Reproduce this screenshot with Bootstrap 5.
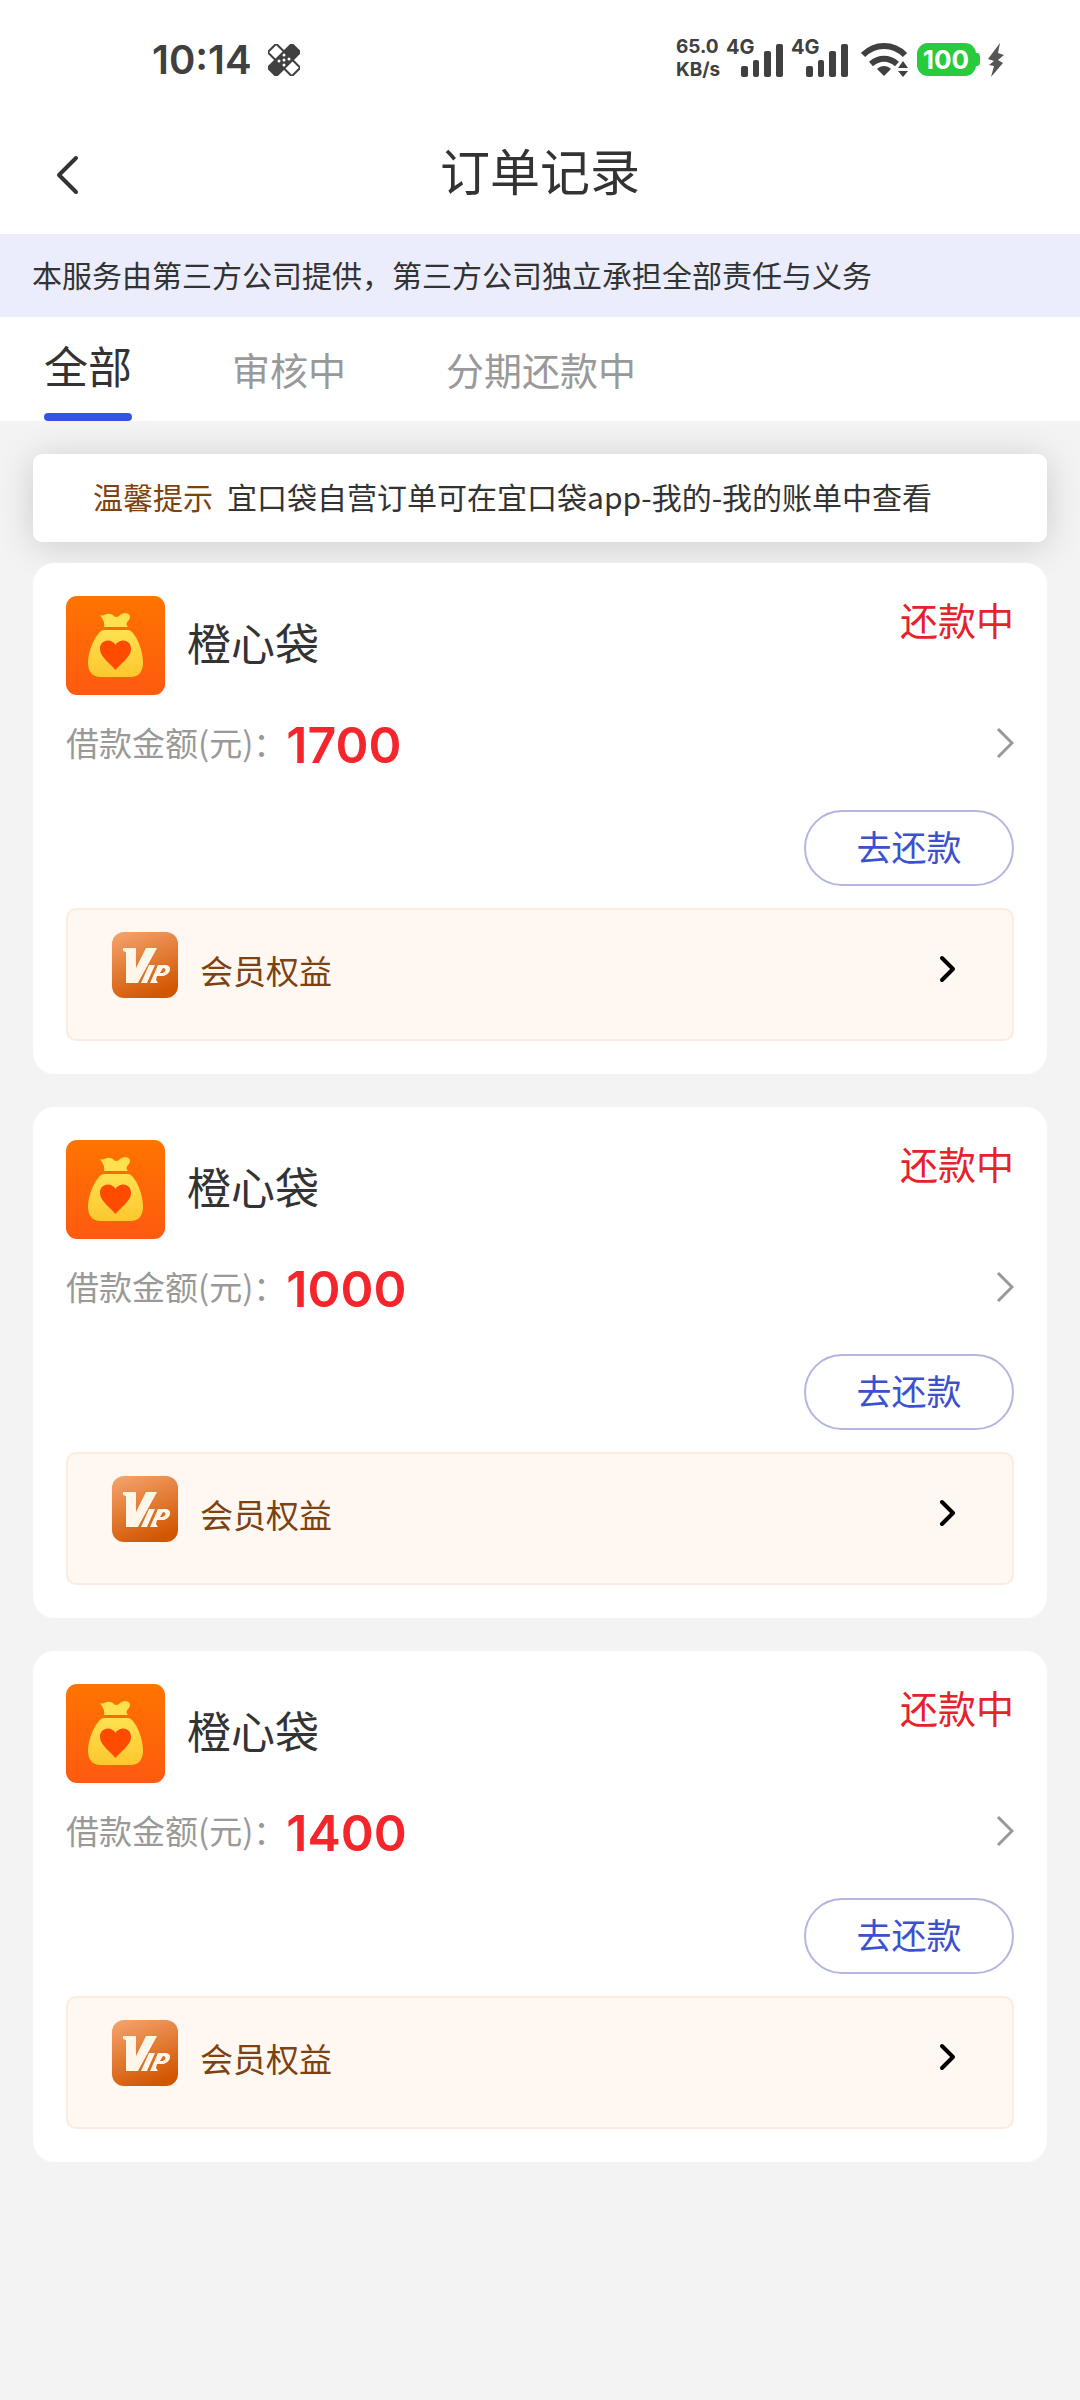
<!DOCTYPE html>
<html lang="zh-CN">
<head>
<meta charset="utf-8">
<meta name="viewport" content="width=device-width, initial-scale=1">
<title>订单记录</title>
<link href="https://cdn.jsdelivr.net/npm/bootstrap@5.3.0/dist/css/bootstrap.min.css" rel="stylesheet">
<style>
  body { font-family: "Noto Sans CJK SC", "Noto Sans", sans-serif; background: #f3f3f3; color: #333; min-height: 100vh; }
  svg { display: block; flex: none; }
  a { color: inherit; text-decoration: none; }
  .status-bar { height: 120px; padding: 0 76px 0 152px; font-family: Inter, sans-serif; font-weight: 600; color: #404040; }
  .clock { font-size: 40px; line-height: 48px; }
  .net-speed { font-size: 19px; line-height: 23px; font-weight: 700; width: 50px; padding-bottom: 4px; }
  .title-bar { height: 114px; padding: 0 48px 4px; }
  .title-bar h1 { font-size: 50px; line-height: 60px; font-weight: 400; padding-bottom: 12px; }
  .back-btn { width: 40px; height: 60px; }
  .notice-bar { background: #ebedfd; padding: 18px 32px 21px; font-size: 30px; line-height: 44px; }
  .order-tabs { height: 104px; padding: 0 44px; gap: 100px; font-size: 38px; color: #999; }
  .order-tabs .nav-link { padding: 24px 0 0; color: inherit; line-height: 56px; }
  .order-tabs .nav-link.active { padding-top: 18px; font-size: 44px; line-height: 60px; color: #333; position: relative; }
  .order-tabs .nav-link.active::after { content: ""; position: absolute; left: 0; right: 0; bottom: 0; height: 8px; border-radius: 4px; background: #3652e3; }
  .orders { padding: 33px; }
  .tip-card { background: #fff; border-radius: 9px; padding: 20px 60px 24px; font-size: 30px; line-height: 44px; margin-bottom: 21px; box-shadow: 0 4px 36px rgba(0,0,0,.16); gap: 14px; }
  .brown { color: #7d420f; }
  .order-card { position: relative; background: #fff; border-radius: 21px; padding: 33px; margin-bottom: 33px; }
  .shop-name { font-size: 44px; line-height: 60px; font-weight: 400; margin: 0 0 8px 22px; }
  .state-text { font-size: 38px; line-height: 46px; color: #e6222a; }
  .amount-row { height: 96px; }
  .amount-label { font-size: 33px; line-height: 44px; color: #999; padding-bottom: 2px; }
  .amount-num { font-family: Inter, sans-serif; font-size: 50px; line-height: 60px; font-weight: 600; color: #f4262c; padding-top: 4px; }
  .pay-btn { width: 210px; height: 76px; border: 2px solid #b4b6e2; border-radius: 38px; color: #3b50d0; font-size: 35px; line-height: 50px; padding: 8px 0 12px; margin: 19px 0 22px; }
  .pay-btn:hover { border-color: #3b50d0; color: #3b50d0; }
  .vip-row { height: 133px; background: #fff7f1; border: 2px solid #fbece0; border-radius: 10px; padding: 22px 56px 0 44px; font-size: 33px; line-height: 44px; color: #7d420f; }
  .vip-row span { padding: 16px 0 0 22px; }
  .vip-row .go-icon { margin: 22px 0 0 auto; }
</style>
<script src="https://cdn.jsdelivr.net/npm/bootstrap@5.3.0/dist/js/bootstrap.bundle.min.js"></script>
</head>
<body>
<svg width="0" height="0" class="position-absolute" aria-hidden="true">
  <defs>
    <linearGradient id="gOrange" x1="0" y1="0" x2="0" y2="1"><stop offset="0" stop-color="#ff7400"/><stop offset="1" stop-color="#ff5a10"/></linearGradient>
    <linearGradient id="gYellow" x1="0" y1="0" x2="0" y2="1"><stop offset="0" stop-color="#ffe150"/><stop offset="1" stop-color="#fcc72e"/></linearGradient>
    <linearGradient id="gVip" x1="0.2" y1="0" x2="0.6" y2="1"><stop offset="0" stop-color="#f3a069"/><stop offset="1" stop-color="#d25500"/></linearGradient>
    <symbol id="bag" viewBox="0 0 99 99">
      <rect width="99" height="99" rx="11" fill="url(#gOrange)"/>
      <path d="M34 19c4 2 6-2 10-1 3 0 4 3 6 3 3 0 5-4 9-4 5 0 6 4 4 7-3 3-3 5-1 7H38c1-5-1-7-4-12Z" fill="#ffe04f"/>
      <path d="M38 34h24c6 0 15 18 15 33 0 9-5 14-12 14H34c-7 0-12-5-12-14 0-15 10-33 16-33Z" fill="url(#gYellow)"/>
      <path d="M49.500 74C44 67 34 61 34 53c0-10 12-11 15.500-4C53 42 65 43 65 53c0 8-10 14-15.500 21Z" fill="#ff4b00"/>
    </symbol>
    <symbol id="vip" viewBox="0 0 66 66">
      <rect width="66" height="66" rx="12" fill="url(#gVip)"/>
      <path d="M11 16h13v20l10-20h11L26 51H14V20l-3-1ZM37 33h6L35 51h-6ZM46 33h7c9 0 5 11-3 11h-5l-1 4 2 3h-8Zm5 3-3 5c6 1 7-5 3-5Z" fill="#fff5e8" fill-rule="evenodd"/>
    </symbol>
    <symbol id="bars" viewBox="0 0 42 34">
      <rect x="0" y="22" width="7" height="11" rx="2"/><rect x="12" y="16" width="6" height="17" rx="2"/><rect x="23" y="7" width="7" height="26" rx="2"/><rect x="35" y="0" width="7" height="33" rx="2"/>
    </symbol>
  </defs>
</svg>

<div class="status-bar d-flex align-items-center justify-content-between bg-white">
  <div class="d-flex align-items-center gap-3">
    <span class="clock">10:14</span>
    <svg width="32" height="32" viewBox="0 0 32 32" aria-hidden="true">
      <g transform="rotate(45 16 16)"><rect x="-1" y="10" width="34" height="12" rx="1" fill="#fff" stroke="#404040" stroke-width="2"/></g>
      <g transform="rotate(-45 16 16)"><rect x="-2" y="9" width="36" height="14" rx="2" fill="#404040"/></g>
      <g fill="#fff"><circle cx="16" cy="11" r="1.500"/><circle cx="21" cy="15" r="1.500"/><circle cx="11" cy="17" r="1.500"/><circle cx="16" cy="16" r="1.500"/><circle cx="16" cy="21" r="1.500"/></g>
    </svg>
  </div>
  <div class="d-flex align-items-center">
    <div class="net-speed">65.0<br>KB/s</div>
    <svg width="65" height="60" viewBox="0 -8 65 60" fill="#404040"><text x="0" y="16" font-size="20" font-weight="700">4G</text><use href="#bars" x="15" y="6" width="42" height="34"/></svg>
    <svg width="70" height="60" viewBox="0 -8 70 60" fill="#404040"><text x="0" y="16" font-size="20" font-weight="700">4G</text><use href="#bars" x="15" y="6" width="42" height="34"/></svg>
    <svg width="56" height="34" viewBox="0 0 56 34" aria-hidden="true">
      <path d="M2 12C14 0 32 0 44 12" fill="none" stroke="#404040" stroke-width="6"/>
      <path d="M10 21c8-7 18-7 26 0" fill="none" stroke="#404040" stroke-width="6"/>
      <path d="M16 26c4-4 10-4 14 0l-7 7Z" fill="#404040"/>
      <path d="m42 18 5 7H37ZM42 34l-5-6h10Z" fill="#404040"/>
    </svg>
    <svg width="71" height="34" viewBox="0 0 71 34"><rect width="59" height="33" rx="11" fill="#27cb3b"/><path d="M58 10h2q3 0 3 4v5q0 4-3 4h-2Z" fill="#27cb3b"/><text x="29" y="26" text-anchor="middle" font-size="26" font-weight="700" fill="#fff">100</text></svg>
    <svg width="16" height="34" viewBox="0 0 16 34" aria-hidden="true"><path d="M12 0 0 16l6 2-5 4 5 1-3 11L15 20l-5-3 6-5-6-2Z" fill="#555"/></svg>
  </div>
</div>

<header class="title-bar d-flex align-items-center justify-content-between bg-white">
  <button type="button" class="back-btn btn p-0 border-0" aria-label="返回"><svg width="40" height="44" viewBox="0 0 40 44" fill="none" stroke="#333" stroke-width="4" stroke-linecap="round" stroke-linejoin="round"><path d="M28 5 11 22l17 17"/></svg></button>
  <h1 class="m-0">订单记录</h1>
  <span class="back-btn"></span>
</header>
<div class="notice-bar">本服务由第三方公司提供，第三方公司独立承担全部责任与义务</div>
<nav class="order-tabs nav flex-nowrap bg-white align-items-stretch">
  <a class="nav-link active" href="#all" aria-current="page">全部</a>
  <a class="nav-link" href="#review">审核中</a>
  <a class="nav-link" href="#repaying">分期还款中</a>
</nav>

<main class="orders">
  <div class="tip-card d-flex"><span class="brown">温馨提示</span><span>宜口袋自营订单可在宜口袋app-我的-我的账单中查看</span></div>

  <article class="order-card">
    <div class="d-flex align-items-start justify-content-between">
      <div class="d-flex align-items-center"><svg width="99" height="99"><use href="#bag"/></svg><h2 class="shop-name">橙心袋</h2></div>
      <span class="state-text">还款中</span>
    </div>
    <a href="#order1" class="amount-row d-flex align-items-center">
      <span class="amount-label">借款金额(元)：</span><span class="amount-num">1700</span>
      <svg class="ms-auto" width="18" height="30" viewBox="0 0 18 30" fill="none" stroke="#999" stroke-width="3"><path d="M2 1l14 14L2 29"/></svg>
    </a>
    <div class="d-flex justify-content-end"><button type="button" class="pay-btn btn">去还款</button></div>
    <a href="#vip1" class="vip-row d-flex align-items-start"><svg width="66" height="66"><use href="#vip"/></svg><span>会员权益</span>
      <svg class="go-icon" width="18" height="30" viewBox="0 0 18 30" fill="none" stroke="#000" stroke-width="4" stroke-linecap="round" stroke-linejoin="round"><path d="M4 4l11 11L4 26"/></svg></a>
  </article>

  <article class="order-card">
    <div class="d-flex align-items-start justify-content-between">
      <div class="d-flex align-items-center"><svg width="99" height="99"><use href="#bag"/></svg><h2 class="shop-name">橙心袋</h2></div>
      <span class="state-text">还款中</span>
    </div>
    <a href="#order2" class="amount-row d-flex align-items-center">
      <span class="amount-label">借款金额(元)：</span><span class="amount-num">1000</span>
      <svg class="ms-auto" width="18" height="30" viewBox="0 0 18 30" fill="none" stroke="#999" stroke-width="3"><path d="M2 1l14 14L2 29"/></svg>
    </a>
    <div class="d-flex justify-content-end"><button type="button" class="pay-btn btn">去还款</button></div>
    <a href="#vip2" class="vip-row d-flex align-items-start"><svg width="66" height="66"><use href="#vip"/></svg><span>会员权益</span>
      <svg class="go-icon" width="18" height="30" viewBox="0 0 18 30" fill="none" stroke="#000" stroke-width="4" stroke-linecap="round" stroke-linejoin="round"><path d="M4 4l11 11L4 26"/></svg></a>
  </article>

  <article class="order-card">
    <div class="d-flex align-items-start justify-content-between">
      <div class="d-flex align-items-center"><svg width="99" height="99"><use href="#bag"/></svg><h2 class="shop-name">橙心袋</h2></div>
      <span class="state-text">还款中</span>
    </div>
    <a href="#order3" class="amount-row d-flex align-items-center">
      <span class="amount-label">借款金额(元)：</span><span class="amount-num">1400</span>
      <svg class="ms-auto" width="18" height="30" viewBox="0 0 18 30" fill="none" stroke="#999" stroke-width="3"><path d="M2 1l14 14L2 29"/></svg>
    </a>
    <div class="d-flex justify-content-end"><button type="button" class="pay-btn btn">去还款</button></div>
    <a href="#vip3" class="vip-row d-flex align-items-start"><svg width="66" height="66"><use href="#vip"/></svg><span>会员权益</span>
      <svg class="go-icon" width="18" height="30" viewBox="0 0 18 30" fill="none" stroke="#000" stroke-width="4" stroke-linecap="round" stroke-linejoin="round"><path d="M4 4l11 11L4 26"/></svg></a>
  </article>
</main>
</body>
</html>
